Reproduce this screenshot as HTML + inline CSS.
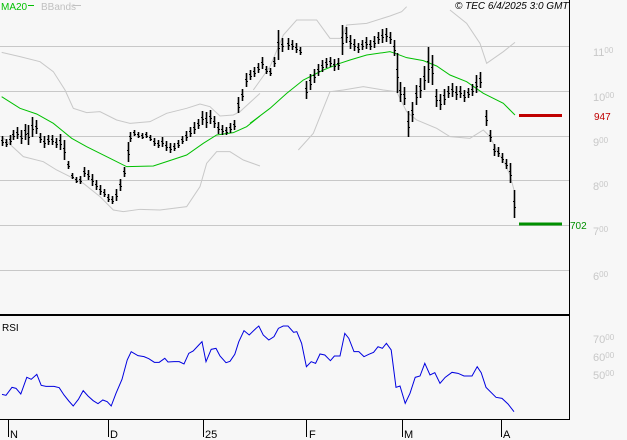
<!DOCTYPE html>
<html><head><meta charset="utf-8"><style>
html,body{margin:0;padding:0;background:#f7f7f7;width:627px;height:440px;overflow:hidden;font-family:"Liberation Sans",sans-serif}
svg{position:absolute;left:0;top:0}
</style></head><body>
<svg id="s" width="627" height="440" xmlns="http://www.w3.org/2000/svg" font-family="Liberation Sans, sans-serif">
<rect width="627" height="440" fill="#f7f7f7"/>
<g stroke="#c8c8c8" stroke-width="1">
<line x1="0" y1="46.5" x2="569" y2="46.5"/>
<line x1="0" y1="91.5" x2="569" y2="91.5"/>
<line x1="0" y1="136.5" x2="569" y2="136.5"/>
<line x1="0" y1="180.5" x2="569" y2="180.5"/>
<line x1="0" y1="225.5" x2="569" y2="225.5"/>
<line x1="0" y1="270.5" x2="569" y2="270.5"/>
</g>
<text x="1" y="10" font-size="10" fill="#00c000">MA20</text>
<line x1="28" y1="5.5" x2="34" y2="5.5" stroke="#00c000"/>
<text x="41" y="10" font-size="10" fill="#c0c0c0">BBands</text>
<line x1="73" y1="5.5" x2="81" y2="5.5" stroke="#c0c0c0"/>
<text x="455" y="9" font-size="10" font-style="italic" fill="#000">© TEC 6/4/2025 3:0 GMT</text>
<g transform="translate(0,40) scale(0.3333)" fill="none">
<polyline vector-effect="non-scaling-stroke" stroke="#c8c8c8" points="5,37 60,50 120,65 160,95 195,150 220,205 260,218 300,215 350,240 390,250 450,245 500,220 560,205 600,192 630,200 660,228 700,225 720,215 780,160"/>
<polyline vector-effect="non-scaling-stroke" stroke="#00c000" points="5,170 60,205 110,222 160,250 215,295 260,320 330,355 380,380 460,378 500,365 560,345 610,310 650,285 700,278 740,260 780,228"/>
<polyline vector-effect="non-scaling-stroke" stroke="#c8c8c8" points="5,290 70,350 130,365 170,390 250,430 300,470 340,510 370,515 420,508 480,510 560,500 600,440 620,370 650,335 690,335 730,360 780,378"/>
</g>
<g transform="translate(250,10) scale(0.3333)" fill="none">
<polyline vector-effect="non-scaling-stroke" stroke="#c8c8c8" points="10,240 60,170 100,75 140,30 200,30 240,85 275,85 290,45 350,40 420,18 455,5 470,-10"/>
<polyline vector-effect="non-scaling-stroke" stroke="#c8c8c8" points="600,0 650,40 690,100 710,160 760,125 795,97"/>
<polyline vector-effect="non-scaling-stroke" stroke="#00c000" points="0,340 60,295 110,250 160,210 220,180 270,160 300,150 350,135 420,125 435,130 470,143 520,152 560,168 600,195 650,215 700,250 760,280 795,315"/>
<polyline vector-effect="non-scaling-stroke" stroke="#c8c8c8" points="145,420 190,370 240,245 280,240 340,230 400,240 440,245 470,305 500,330 560,355 600,380 660,385 700,360 720,380 740,420"/>
</g>
<polyline fill="none" stroke="#c8c8c8" points="496,150 503,160 510,175 514,190"/>
<g id="bars" stroke="#000" stroke-width="2"></g>
<line x1="519" y1="115.5" x2="562" y2="115.5" stroke="#c00000" stroke-width="3"/>
<text x="594" y="120" font-size="10" fill="#c00000">947</text>
<line x1="519" y1="224" x2="562" y2="224" stroke="#009000" stroke-width="3"/>
<text x="570" y="229" font-size="10" fill="#009000">702</text>
<g font-size="11" fill="#c8c8c8">
<text x="593" y="56">11<tspan font-size="8" dy="-3">00</tspan></text>
<text x="593" y="101">10<tspan font-size="8" dy="-3">00</tspan></text>
<text x="593" y="146">9<tspan font-size="8" dy="-3">00</tspan></text>
<text x="593" y="190">8<tspan font-size="8" dy="-3">00</tspan></text>
<text x="593" y="235">7<tspan font-size="8" dy="-3">00</tspan></text>
<text x="593" y="280">6<tspan font-size="8" dy="-3">00</tspan></text>
<text x="593" y="343">70<tspan font-size="8" dy="-3">00</tspan></text>
<text x="593" y="361">60<tspan font-size="8" dy="-3">00</tspan></text>
<text x="593" y="379">50<tspan font-size="8" dy="-3">00</tspan></text>
</g>
<line x1="569.5" y1="0" x2="569.5" y2="420" stroke="#000"/>
<line x1="0" y1="315" x2="570" y2="315" stroke="#000" stroke-width="2"/>
<line x1="0" y1="419.5" x2="570" y2="419.5" stroke="#000"/>
<text x="2" y="331" font-size="10" fill="#000">RSI</text>
<g transform="translate(0,300) scale(0.4,0.33333)">
<polyline vector-effect="non-scaling-stroke" fill="none" stroke="#0000e0" stroke-width="1" points="5,283 15,286 30,262 40,265 52,282 67,232 78,238 92,223 103,256 115,259 135,259 148,263 160,285 172,303 183,318 196,298 208,272 220,288 233,302 245,311 257,300 268,305 278,318 290,280 305,238 318,180 328,155 345,167 360,170 372,176 386,187 398,187 412,175 420,186 435,185 448,185 460,192 472,160 483,153 497,135 505,125 515,185 528,148 540,145 550,168 565,188 575,184 587,163 597,125 610,92 623,105 640,85 647,78 658,105 672,120 685,110 696,85 708,78 720,78 734,97 742,95 754,130 766,200 778,185 789,190 800,162 812,165 826,182 836,168 850,168 862,100 872,115 885,155 897,155 910,170 922,163 934,157 945,140 956,145 966,130 978,150 990,262 1000,258 1013,310 1025,280 1038,232 1050,228 1062,190 1075,225 1087,218 1100,250 1113,232 1130,217 1145,220 1160,228 1180,228 1193,200 1203,218 1215,262 1240,292 1255,295 1270,312 1285,335"/>
</g>
<g stroke="#000" stroke-width="1">
<line x1="8.5" y1="420" x2="8.5" y2="437"/>
<line x1="108.5" y1="420" x2="108.5" y2="437"/>
<line x1="203.5" y1="420" x2="203.5" y2="437"/>
<line x1="306.5" y1="420" x2="306.5" y2="437"/>
<line x1="402.5" y1="420" x2="402.5" y2="437"/>
<line x1="501.5" y1="420" x2="501.5" y2="437"/>
</g>
<g font-size="11" fill="#000">
<text x="10" y="438">N</text>
<text x="110" y="438">D</text>
<text x="205" y="438">25</text>
<text x="309" y="438">F</text>
<text x="404" y="438">M</text>
<text x="503" y="438">A</text>
</g>
</svg>
<script>
var d=[[2,141,10],[6,143,8],[10,140,10],[13,135,10],[17,133,12],[21,137,14],[25,132,16],[28,135,20],[32,127,20],[36,127,14],[40,138,10],[44,142,12],[48,140,10],[52,140,10],[56,143,10],[60,142,16],[64,150,20],[68,165,8],[72,176,6],[76,180,6],[80,180,8],[84,172,10],[88,175,10],[92,180,12],[96,185,10],[100,190,10],[104,193,8],[108,198,8],[112,200,8],[116,195,12],[120,185,12],[124,172,10],[128,152,20],[130,137,10],[134,133,6],[138,135,6],[142,136,6],[146,135,6],[150,138,6],[154,142,8],[158,144,8],[162,142,10],[166,146,10],[170,148,10],[174,147,8],[178,144,8],[182,140,8],[186,136,10],[190,132,10],[194,128,12],[198,124,10],[202,118,14],[206,120,16],[210,117,14],[214,122,12],[218,128,12],[222,130,10],[226,131,8],[230,128,10],[234,125,10],[238,105,16],[242,95,12],[246,80,14],[250,75,10],[254,72,10],[258,68,10],[262,63,12],[266,70,8],[270,72,8],[274,62,10],[278,45,30],[282,45,14],[288,44,12],[292,45,10],[296,48,10],[300,51,8],[306,90,18],[310,82,16],[314,76,14],[318,70,12],[322,66,12],[326,63,10],[330,62,10],[334,65,12],[338,64,12],[342,40,30],[346,35,16],[350,42,14],[354,45,12],[358,48,10],[362,45,10],[366,43,12],[370,45,10],[374,42,12],[378,38,12],[382,36,14],[386,35,14],[390,38,12],[394,48,16],[397,73,40],[400,92,20],[404,96,18],[408,124,26],[412,112,20],[416,95,20],[420,88,20],[424,78,24],[428,65,36],[432,70,30],[436,98,18],[440,102,16],[444,97,16],[448,92,12],[452,90,14],[456,93,14],[460,92,12],[464,96,12],[468,93,10],[472,90,12],[476,84,18],[480,80,16],[486,118,16],[490,136,12],[494,150,12],[498,152,10],[502,158,10],[506,164,10],[510,173,20],[514,204,28]];
var g=document.getElementById('bars'),h='';
d.forEach(function(b){var x=b[0]+0.5,t=b[1]-b[2]/2,bt=b[1]+b[2]/2,o=Math.round(t+(bt-t)*0.4)+0.5,c=Math.round(t+(bt-t)*0.6)+0.5;
h+='<line x1="'+x+'" y1="'+t+'" x2="'+x+'" y2="'+bt+'" stroke-width="1.6"/>';
h+='<line x1="'+(x-1.5)+'" y1="'+o+'" x2="'+x+'" y2="'+o+'" stroke-width="1"/>';
h+='<line x1="'+x+'" y1="'+c+'" x2="'+(x+1.5)+'" y2="'+c+'" stroke-width="1"/>';});
g.innerHTML=h;
</script>
</body></html>
